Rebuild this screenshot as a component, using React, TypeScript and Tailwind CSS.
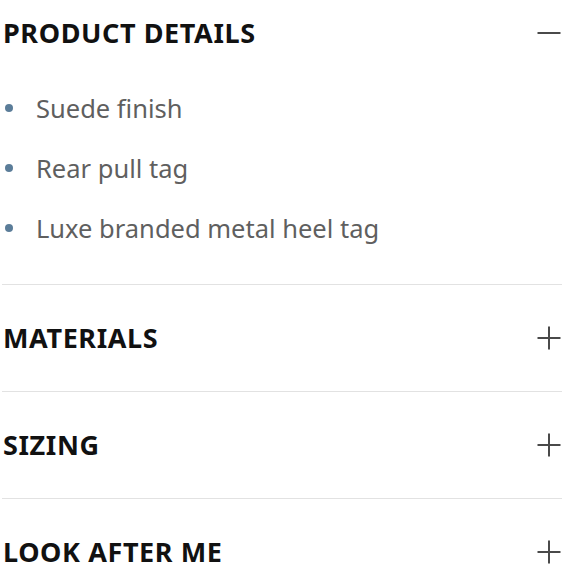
import React, { useState } from 'react';

const sections = [
  {
    title: 'PRODUCT DETAILS',
    items: ['Suede finish', 'Rear pull tag', 'Luxe branded metal heel tag'],
  },
  { title: 'MATERIALS', items: [] },
  { title: 'SIZING', items: [] },
  { title: 'LOOK AFTER ME', items: [] },
];

const ToggleIcon = ({ open }: { open: boolean }) => (
  <svg width="24" height="24" viewBox="0 0 24 24" className="text-[#4a4a4a]">
    <line x1="0.5" y1="12" x2="23.5" y2="12" stroke="currentColor" strokeWidth="2" />
    {!open && <line x1="12" y1="0.5" x2="12" y2="23.5" stroke="currentColor" strokeWidth="2" />}
  </svg>
);

const App = () => {
  const [openIndex, setOpenIndex] = useState<number>(0);

  return (
    <div className="w-[580px] h-[580px] overflow-hidden bg-white font-['Noto_Sans',sans-serif]">
      <div className="ml-[2px] w-[560px]">
        {sections.map((section, i) => {
          const open = openIndex === i;
          return (
            <div key={section.title} className={i < sections.length - 1 ? 'border-b border-[#e2e2e2]' : ''}>
              <button
                type="button"
                onClick={() => setOpenIndex(open ? -1 : i)}
                className={`w-full flex items-center justify-between pl-[1px] pr-[1px] ${i === 0 ? 'h-[66px]' : 'h-[106px]'}`}
              >
                <span className="text-[27px] font-bold text-[#111] tracking-[0.6px]">{section.title}</span>
                <ToggleIcon open={open} />
              </button>
              {open && section.items.length > 0 && (
                <ul className="mt-[12px] pb-[26px]">
                  {section.items.map(item => (
                    <li key={item} className="h-[60px] flex items-center">
                      <span className="w-[8px] h-[8px] rounded-full bg-[#5b7d99] ml-[3px] mr-[23px]" />
                      <span className="text-[25.5px] text-[#5f5f5f]">{item}</span>
                    </li>
                  ))}
                </ul>
              )}
            </div>
          );
        })}
      </div>
    </div>
  );
};

export default App;
